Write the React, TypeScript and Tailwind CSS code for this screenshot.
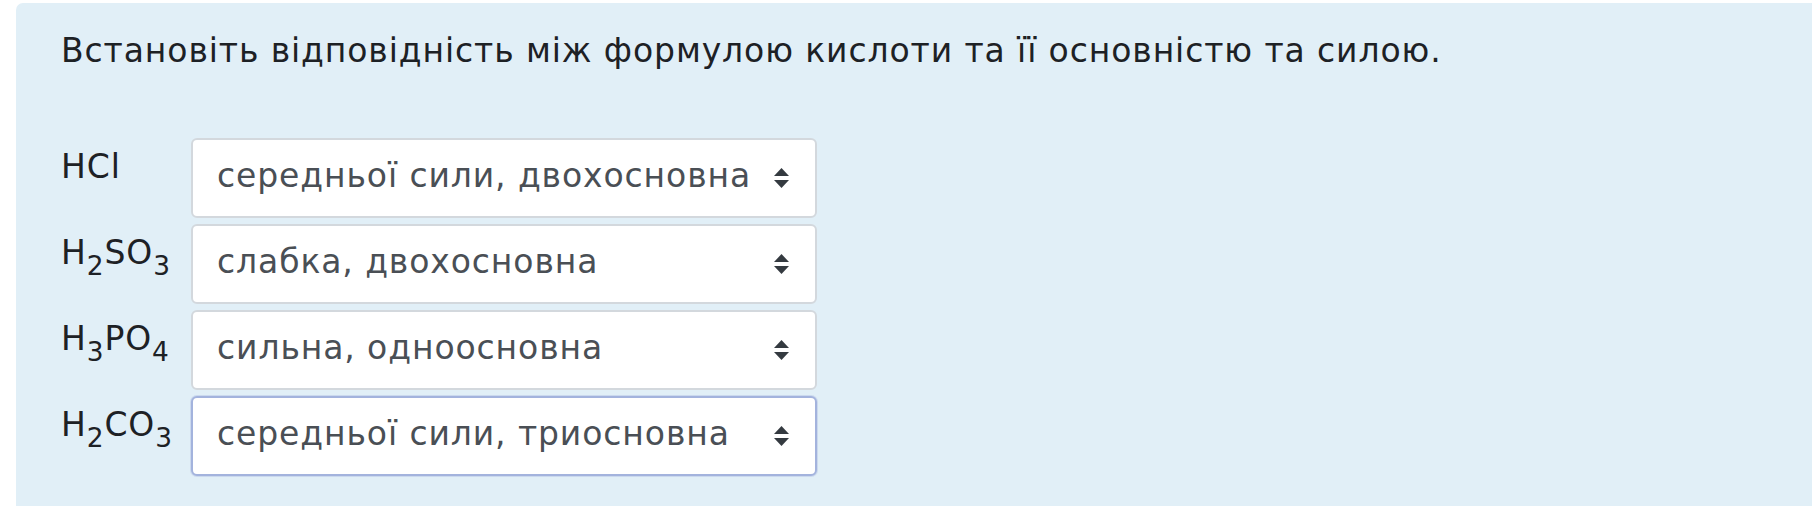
import React from 'react'

const sub = 'text-[0.8em] align-[-0.16em] leading-none'

const rows: { label: React.ReactNode; value: string; focused?: boolean }[] = [
  { label: <>HCl</>, value: 'середньої сили, двохосновна' },
  { label: <>H<sub className={sub}>2</sub>SO<sub className={sub}>3</sub></>, value: 'слабка, двохосновна' },
  { label: <>H<sub className={sub}>3</sub>PO<sub className={sub}>4</sub></>, value: 'сильна, одноосновна' },
  { label: <>H<sub className={sub}>2</sub>CO<sub className={sub}>3</sub></>, value: 'середньої сили, триосновна', focused: true },
]

function SelectArrows() {
  return (
    <svg width="15" height="20" viewBox="0 0 15 20" className="text-[#343a40]">
      <path d="M7.5 0 L15 8 L0 8 Z" fill="currentColor" />
      <path d="M0 12 L15 12 L7.5 20 Z" fill="currentColor" />
    </svg>
  )
}

function FakeSelect({ value, focused }: { value: string; focused?: boolean }) {
  return (
    <div
      className={
        focused
          ? 'flex h-[80px] w-[626px] items-center justify-between rounded-[6px] border-2 border-[#a3b3dd] bg-white pl-[24px] pr-[26px] shadow-[0_0_0_1px_rgba(163,179,221,0.35)]'
          : 'flex h-[80px] w-[626px] items-center justify-between rounded-[6px] border-2 border-[#d3d8dd] bg-white pl-[24px] pr-[26px]'
      }
    >
      <span className="-mt-[6px] whitespace-nowrap text-[#4a4f55]">{value}</span>
      <SelectArrows />
    </div>
  )
}

export default function App() {
  return (
    <div className="min-h-screen bg-white pl-[16px] pt-[3px]" style={{ fontFamily: '"DejaVu Sans", "Noto Sans", sans-serif' }}>
      <div className="min-h-[503px] rounded-tl-[7px] bg-[#e1eff7] pl-[45px] pt-[25px] text-[33px] leading-[45px] tracking-[0.9px] text-[#1d2125]">
        <p>Встановіть відповідність між формулою кислоти та її основністю та силою.</p>
        <div className="mt-[65px] flex flex-col gap-[6px]">
          {rows.map((r, i) => (
            <div key={i} className="flex items-start">
              <div className="w-[130px] pt-[6px] whitespace-nowrap">{r.label}</div>
              <FakeSelect value={r.value} focused={r.focused} />
            </div>
          ))}
        </div>
      </div>
    </div>
  )
}
